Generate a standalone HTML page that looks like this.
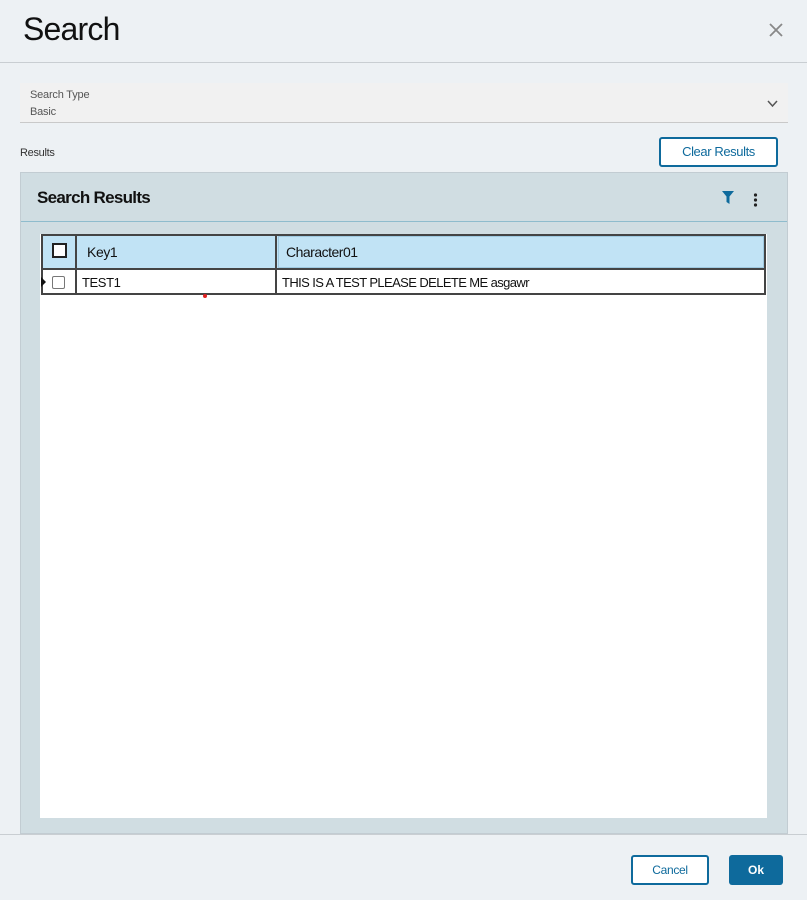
<!DOCTYPE html>
<html><head><meta charset="utf-8"><style>
*{box-sizing:border-box;margin:0;padding:0}
body{width:807px;height:900px;background:#edf1f4;font-family:"Liberation Sans",sans-serif;position:relative;overflow:hidden;color:#111}
.abs{position:absolute}
</style></head><body>
<div class="abs" style="left:23px;top:11px;font-size:32px;color:#111;letter-spacing:-0.8px">Search</div>
<svg class="abs" style="left:768px;top:22px" width="16" height="16"><path d="M2 2L14 14M14 2L2 14" stroke="#888" stroke-width="1.8"/></svg>
<div class="abs" style="left:0;top:62px;width:807px;height:1px;background:#c9ced2"></div>

<div class="abs" style="left:20px;top:83px;width:768px;height:40px;background:#f1f1f1;border-bottom:1px solid #c9c9c9"></div>
<div class="abs" style="left:30px;top:89px;font-size:11px;color:#555;letter-spacing:-0.2px">Search Type</div>
<div class="abs" style="left:30px;top:106px;font-size:11px;color:#555;letter-spacing:-0.2px">Basic</div>
<svg class="abs" style="left:767px;top:100px" width="11" height="8"><path d="M1 1L5.5 6L10 1" stroke="#555" stroke-width="1.5" fill="none"/></svg>

<div class="abs" style="left:20px;top:147px;font-size:11px;color:#333;letter-spacing:-0.3px">Results</div>
<div class="abs" style="left:659px;top:137px;width:119px;height:30px;border:2px solid #0e6a9c;border-radius:3px;background:#fff;color:#0e6a9c;font-size:13px;text-align:center;line-height:26px;letter-spacing:-0.4px">Clear Results</div>

<div class="abs" style="left:20px;top:172px;width:768px;height:662px;background:#d0dde2;border:1px solid #c2ccd2"></div>
<div class="abs" style="left:21px;top:221px;width:766px;height:1px;background:#8fbccd"></div>
<div class="abs" style="left:37px;top:188px;font-size:17px;font-weight:bold;color:#111;letter-spacing:-0.7px">Search Results</div>
<svg class="abs" style="left:722px;top:191px" width="12" height="13"><path d="M0 0H12L7.5 5.5V13L4.5 11V5.5Z" fill="#0e6a9c"/></svg>
<svg class="abs" style="left:753px;top:193px" width="5" height="14"><circle cx="2.5" cy="2" r="1.6" fill="#222"/><circle cx="2.5" cy="7" r="1.6" fill="#222"/><circle cx="2.5" cy="12" r="1.6" fill="#222"/></svg>

<div class="abs" style="left:40px;top:234px;width:727px;height:584px;background:#fff"></div>
<div class="abs" style="left:41px;top:234px;width:725px;height:36px;background:#c1e3f5;border:2px solid #444"></div>
<div class="abs" style="left:75px;top:234px;width:2px;height:60px;background:#444"></div>
<div class="abs" style="left:275px;top:234px;width:2px;height:60px;background:#444"></div>
<div class="abs" style="left:278px;top:236px;width:486px;height:32px;border:1px solid #9fc9e0"></div>
<div class="abs" style="left:52px;top:243px;width:15px;height:15px;border:2px solid #222;background:#fff"></div>
<div class="abs" style="left:87px;top:244px;font-size:14px;color:#111;letter-spacing:-0.4px">Key1</div>
<div class="abs" style="left:286px;top:244px;font-size:14px;color:#111;letter-spacing:-0.5px">Character01</div>
<div class="abs" style="left:41px;top:269px;width:2px;height:25px;background:#444"></div>
<div class="abs" style="left:764px;top:269px;width:2px;height:25px;background:#444"></div>
<div class="abs" style="left:41px;top:293px;width:725px;height:2px;background:#444"></div>
<svg class="abs" style="left:41px;top:277px" width="5" height="10"><path d="M0 0L5 5L0 10Z" fill="#111"/></svg>
<div class="abs" style="left:52px;top:276px;width:13px;height:13px;border:1px solid #777;border-radius:2px;background:#fff"></div>
<div class="abs" style="left:82px;top:275px;font-size:13px;color:#111;letter-spacing:-0.4px">TEST1</div>
<div class="abs" style="left:282px;top:275px;font-size:13px;color:#111;letter-spacing:-0.6px">THIS IS A TEST PLEASE DELETE ME asgawr</div>
<div class="abs" style="left:203px;top:294px;width:4px;height:4px;border-radius:50%;background:#e02020"></div>

<div class="abs" style="left:0;top:834px;width:807px;height:1px;background:#c9ced2"></div>
<div class="abs" style="left:631px;top:855px;width:78px;height:30px;border:2px solid #0e6a9c;border-radius:3px;background:#fff;color:#0e6a9c;font-size:12px;text-align:center;line-height:26px;letter-spacing:-0.3px">Cancel</div>
<div class="abs" style="left:729px;top:855px;width:54px;height:30px;border-radius:3px;background:#0e6a9c;color:#fff;font-size:12px;font-weight:bold;text-align:center;line-height:30px">Ok</div>
</body></html>
